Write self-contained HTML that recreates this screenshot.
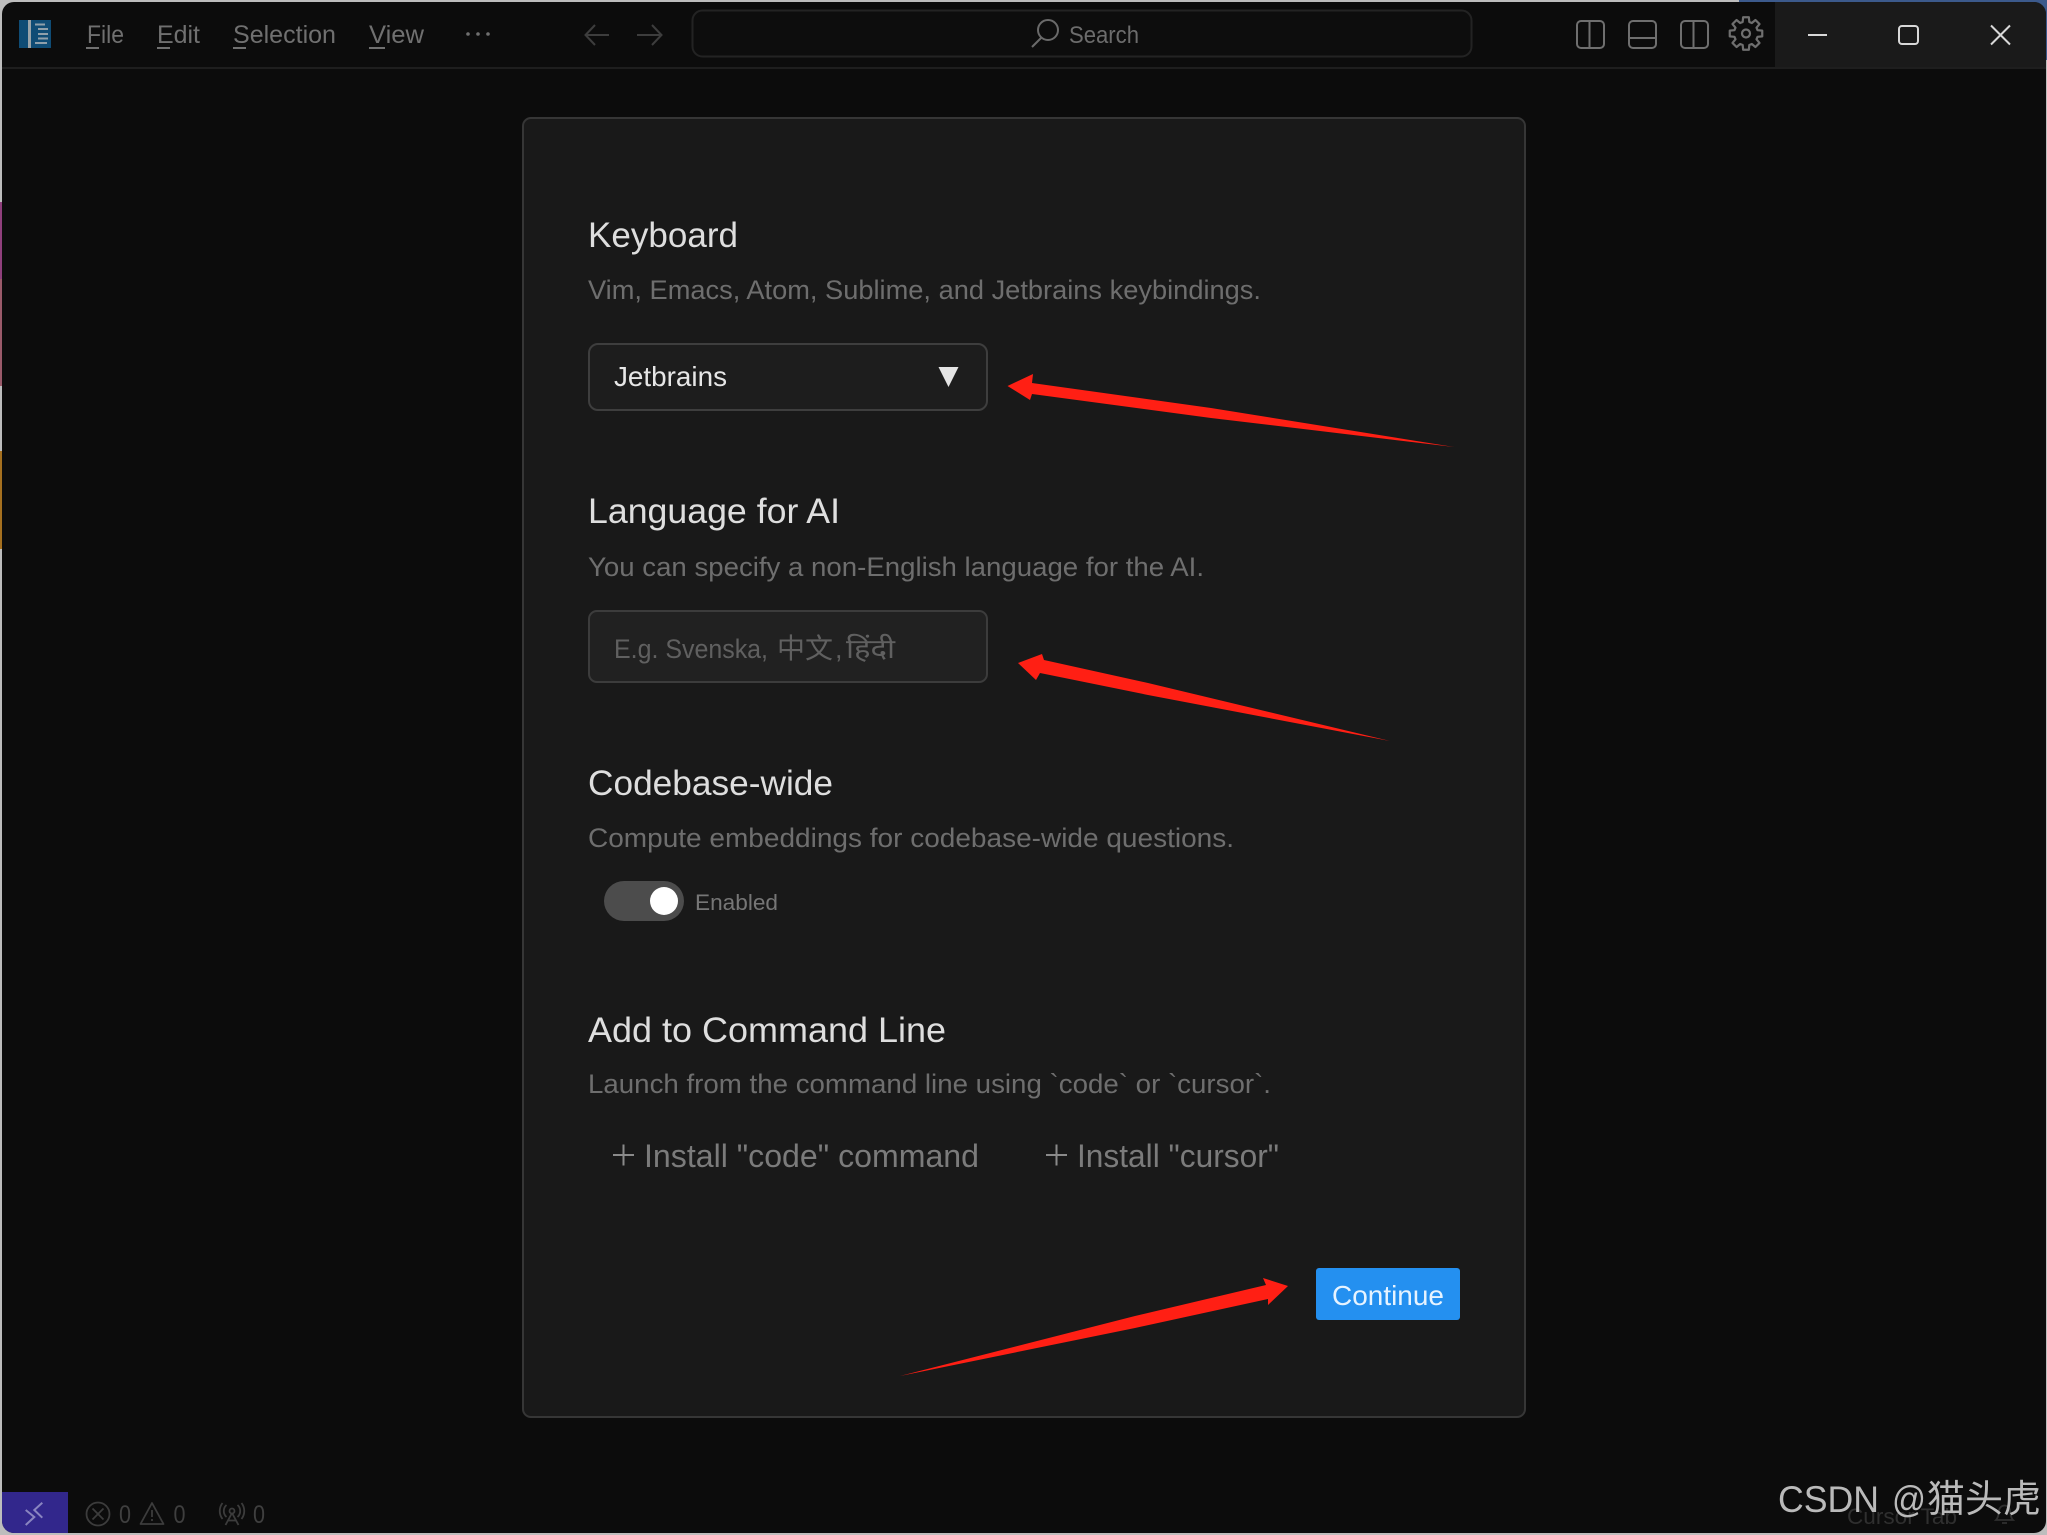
<!DOCTYPE html>
<html lang="en">
<head>
<meta charset="utf-8">
<title>Cursor setup</title>
<style>
html,body{margin:0;padding:0;width:2047px;height:1535px;overflow:hidden;background:#bdbdbd}
svg{display:block;position:absolute;left:0;top:0}
text{font-family:"Liberation Sans","Noto Sans CJK SC","DejaVu Sans",sans-serif}
</style>
</head>
<body>
<svg width="2047" height="1535" viewBox="0 0 2047 1535" xmlns="http://www.w3.org/2000/svg">
<!-- desktop fragments behind window -->
<rect width="2047" height="1535" fill="#bdbdbd"/>
<rect x="1739" y="0" width="308" height="30" fill="#3c5a8c"/>
<rect x="2040" y="0" width="7" height="60" fill="#3c5a8c"/>
<rect x="0" y="202" width="2" height="77" fill="#8f3f7c"/>
<rect x="0" y="279" width="2" height="107" fill="#9a5a6a"/>
<rect x="0" y="451" width="2" height="98" fill="#a5701f"/>
<!-- window -->
<rect x="2" y="2" width="2044" height="1531" rx="12" fill="#0c0c0c"/>
<path d="M1775 2H2034a12 12 0 0 1 12 12V68H1775Z" fill="#1a1a1a"/>
<rect x="2" y="67" width="2044" height="2" fill="#1e1e1e"/>

<!-- logo -->
<rect x="19" y="20" width="32" height="28" fill="#0f4c75"/>
<rect x="28" y="20" width="3" height="28" fill="#9aa3a8"/>
<g fill="#8fa0ab">
<rect x="35" y="23.500" width="10" height="2"/>
<rect x="38" y="28" width="10" height="2"/>
<rect x="38" y="33" width="10" height="2"/>
<rect x="38" y="37.500" width="10" height="2"/>
<rect x="35" y="42" width="12" height="2"/>
</g>

<!-- menu -->
<g fill="#707070" font-size="25">
<text x="87" y="43" textLength="37" lengthAdjust="spacingAndGlyphs">File</text>
<text x="157" y="43" textLength="43" lengthAdjust="spacingAndGlyphs">Edit</text>
<text x="233" y="43" textLength="103" lengthAdjust="spacingAndGlyphs">Selection</text>
<text x="369" y="43" textLength="55" lengthAdjust="spacingAndGlyphs">View</text>
<rect x="86" y="47" width="13" height="2"/>
<rect x="157" y="47" width="13" height="2"/>
<rect x="233" y="47" width="13" height="2"/>
<rect x="369" y="47" width="16" height="2"/>
<circle cx="468" cy="34" r="1.800"/>
<circle cx="478" cy="34" r="1.800"/>
<circle cx="488" cy="34" r="1.800"/>
</g>

<!-- nav arrows -->
<g fill="none" stroke="#3d3d3d" stroke-width="2">
<path d="M609 35H586M595 25L585.500 35L595 45"/>
<path d="M637 35H660M652 25L661.500 35L652 45"/>
</g>

<!-- search box -->
<rect x="692.500" y="10.500" width="779" height="46" rx="10" fill="#0d0d0d" stroke="#232323" stroke-width="2"/>
<g fill="none" stroke="#6a6a6a" stroke-width="2">
<circle cx="1048" cy="30" r="10"/>
<path d="M1041 38L1032 47"/>
</g>
<text x="1069" y="43" font-size="24" fill="#6c6c6c" textLength="70" lengthAdjust="spacingAndGlyphs">Search</text>

<!-- layout icons -->
<g fill="none" stroke="#6f6f6f" stroke-width="2">
<rect x="1577" y="21" width="27" height="27" rx="4"/>
<path d="M1589.500 21V48"/>
<rect x="1629" y="21" width="27" height="27" rx="4"/>
<path d="M1629 38H1656"/>
<rect x="1681" y="21" width="27" height="27" rx="4"/>
<path d="M1693.500 21V48"/>
<g transform="translate(1746 33.500)" stroke-linejoin="round" stroke-width="2.200">
<polygon points="11.54,-3.31 16.25,-2.87 16.25,2.87 11.54,3.31 10.5,5.82 13.52,9.46 9.46,13.52 5.82,10.5 3.31,11.54 2.87,16.25 -2.87,16.25 -3.31,11.54 -5.82,10.5 -9.46,13.52 -13.52,9.46 -10.5,5.82 -11.54,3.31 -16.25,2.87 -16.25,-2.87 -11.54,-3.31 -10.5,-5.82 -13.52,-9.46 -9.46,-13.52 -5.82,-10.5 -3.31,-11.54 -2.87,-16.25 2.87,-16.25 3.31,-11.54 5.82,-10.5 9.46,-13.52 13.52,-9.46 10.5,-5.82"/>
<circle r="4"/>
</g>
</g>

<!-- window controls -->
<g fill="none" stroke="#d8d8d8" stroke-width="2">
<path d="M1808 35H1827"/>
<rect x="1899" y="26" width="19" height="18" rx="3"/>
<path d="M1991 25.500L2010 44.500M2010 25.500L1991 44.500"/>
</g>

<!-- card -->
<rect x="523" y="118" width="1002" height="1299" rx="8" fill="#191919" stroke="#363636" stroke-width="2"/>

<!-- Keyboard -->
<text x="588" y="247" font-size="35" fill="#dedede" textLength="150" lengthAdjust="spacingAndGlyphs">Keyboard</text>
<text x="588" y="299" font-size="27" fill="#6e6e6e" textLength="673" lengthAdjust="spacingAndGlyphs">Vim, Emacs, Atom, Sublime, and Jetbrains keybindings.</text>
<rect x="589" y="344" width="398" height="66" rx="9" fill="#1d1d1d" stroke="#3e3e3e" stroke-width="2"/>
<text x="614" y="386" font-size="27.800" fill="#e6e6e6" textLength="113" lengthAdjust="spacingAndGlyphs">Jetbrains</text>
<polygon points="938.500,367 958.500,367 948.500,387" fill="#e4e4e4"/>

<!-- Language -->
<text x="588" y="523" font-size="35" fill="#dedede" textLength="252" lengthAdjust="spacingAndGlyphs">Language for AI</text>
<text x="588" y="576" font-size="27" fill="#6e6e6e" textLength="616" lengthAdjust="spacingAndGlyphs">You can specify a non-English language for the AI.</text>
<rect x="589" y="611" width="398" height="71" rx="8" fill="#212121" stroke="#3c3c3c" stroke-width="2"/>
<g fill="#606060" font-size="27">
<text x="614" y="658" textLength="154" lengthAdjust="spacingAndGlyphs">E.g. Svenska,</text>
<text x="777" y="658" textLength="56" lengthAdjust="spacingAndGlyphs" font-size="28">中文</text>
<text x="835" y="658">,</text>
<text x="846" y="658" textLength="49" lengthAdjust="spacingAndGlyphs">हिंदी</text>
</g>

<!-- Codebase -->
<text x="588" y="795" font-size="35" fill="#dedede" textLength="245" lengthAdjust="spacingAndGlyphs">Codebase-wide</text>
<text x="588" y="847" font-size="27" fill="#6e6e6e" textLength="646" lengthAdjust="spacingAndGlyphs">Compute embeddings for codebase-wide questions.</text>
<rect x="604" y="881" width="80" height="40" rx="20" fill="#4c4c4c"/>
<circle cx="664" cy="901" r="14" fill="#ffffff"/>
<text x="695" y="910" font-size="22.500" fill="#767676" textLength="83" lengthAdjust="spacingAndGlyphs">Enabled</text>

<!-- Command line -->
<text x="588" y="1042" font-size="35" fill="#dedede" textLength="358" lengthAdjust="spacingAndGlyphs">Add to Command Line</text>
<text x="588" y="1093" font-size="27" fill="#6e6e6e" textLength="683" lengthAdjust="spacingAndGlyphs">Launch from the command line using `code` or `cursor`.</text>
<g stroke="#8a8a8a" stroke-width="2">
<path d="M613 1155H634M623.500 1144.500V1165.500"/>
<path d="M1046 1155H1067M1056.500 1144.500V1165.500"/>
</g>
<text x="644" y="1167" font-size="32" fill="#7b7b7b" textLength="335" lengthAdjust="spacingAndGlyphs">Install "code" command</text>
<text x="1077" y="1167" font-size="32" fill="#7b7b7b" textLength="202" lengthAdjust="spacingAndGlyphs">Install "cursor"</text>

<!-- Continue -->
<rect x="1316" y="1268" width="144" height="52" rx="3" fill="#2490f0"/>
<text x="1332" y="1305" font-size="28" fill="#e6f3ff" textLength="112" lengthAdjust="spacingAndGlyphs">Continue</text>

<!-- red arrows -->
<g fill="#ff1f14">
<polygon points="1007.500,386 1033,374 1032,383 1211,408 1454,447 1211,418 1032,394 1030,400"/>
<polygon points="1018,663 1042,654 1044,660 1148,683 1390,741 1148,695 1040,673 1036,680"/>
<polygon points="1288,1286 1263,1278 1266,1285 1135,1316 900,1376 1135,1328 1268,1299 1268,1305"/>
</g>

<!-- status bar -->
<path d="M2 1492H68V1533H14a12 12 0 0 1 -12 -12Z" fill="#32278c"/>
<g fill="none" stroke="#8a85c0" stroke-width="2">
<path d="M25.700 1510L34.300 1517L25.700 1525"/>
<path d="M42.300 1502.700L34.300 1510L42.300 1517.700"/>
</g>
<g fill="none" stroke="#3c3c3c" stroke-width="1.800">
<circle cx="98" cy="1514" r="11.500"/>
<path d="M92.500 1508.500L103.500 1519.500M103.500 1508.500L92.500 1519.500"/>
<path d="M152 1503L163.500 1524H140.500Z" stroke-linejoin="round"/>
<path d="M152 1510V1517M152 1519V1521"/>
<circle cx="232" cy="1511" r="2.500"/>
<path d="M232 1513L225.500 1525M232 1513L238.500 1525M228 1520.500H236"/>
<path d="M226.500 1505a8 8 0 0 0 0 12M237.500 1505a8 8 0 0 1 0 12M222.500 1503a13 13 0 0 0 0 16M241.500 1503a13 13 0 0 1 0 16"/>
</g>
<g fill="#3f3f3f" font-size="25">
<text x="119" y="1523" textLength="12" lengthAdjust="spacingAndGlyphs">0</text>
<text x="173.500" y="1523" textLength="12" lengthAdjust="spacingAndGlyphs">0</text>
<text x="253" y="1523" textLength="12" lengthAdjust="spacingAndGlyphs">0</text>
</g>
<text x="1847" y="1524" font-size="22" fill="#2f2f2f" textLength="110" lengthAdjust="spacingAndGlyphs">Cursor Tab</text>
<g fill="none" stroke="#2f2f2f" stroke-width="1.800">
<path d="M1996 1520c3-3 2-6 3-9a5.500 5.500 0 0 1 11 0c1 3 0 6 3 9Z"/>
<path d="M2002 1523h5"/>
</g>
<g fill="#bababa" font-size="37">
<text x="1778" y="1512" textLength="101" lengthAdjust="spacingAndGlyphs">CSDN</text>
<text x="1892" y="1512" textLength="34" lengthAdjust="spacingAndGlyphs">@</text>
<text x="1927" y="1512" textLength="114" lengthAdjust="spacingAndGlyphs" font-size="38">猫头虎</text>
</g>
</svg>
</body>
</html>
